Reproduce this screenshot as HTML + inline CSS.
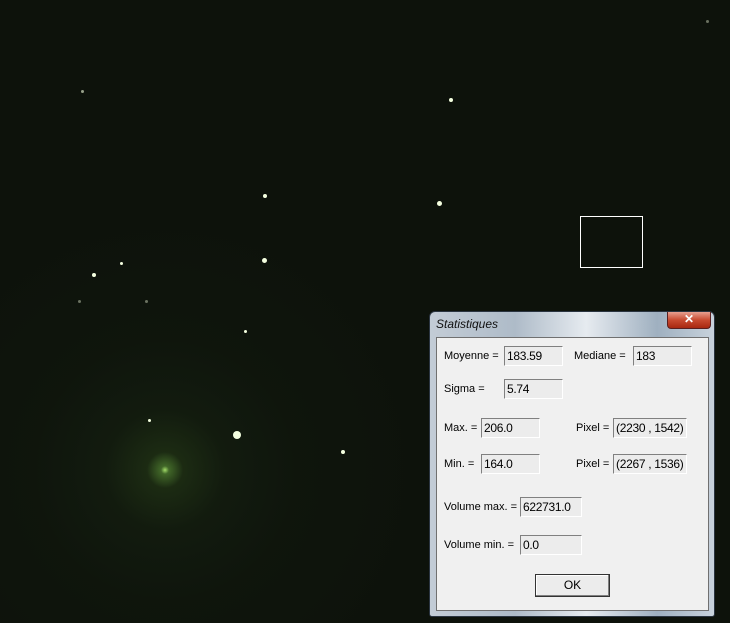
<!DOCTYPE html>
<html><head><meta charset="utf-8"><style>
*{margin:0;padding:0;box-sizing:border-box}
body{width:730px;height:623px;overflow:hidden;position:relative;font-family:"Liberation Sans",sans-serif;
background:
radial-gradient(circle at 165px 470px,rgba(170,230,110,.95) 0,rgba(100,160,60,.6) 4px,rgba(50,80,30,.4) 18px,rgba(30,48,22,.3) 60px,rgba(22,34,18,.2) 130px,rgba(15,25,12,0) 260px),
#0d120b;}
.s{position:absolute;border-radius:50%;background:#f4ffe0;}
.dlg{position:absolute;left:429px;top:311px;width:286px;height:306px;border:1px solid #2a3440;border-radius:6px 6px 3px 3px;
background:linear-gradient(90deg,#c3ccd6 0,#aebbc8 30%,#e6ebf0 55%,#9fb0c0 80%,#c8d2dc 100%);}
.title{position:absolute;left:6px;top:5px;font-style:italic;font-size:12px;color:#111}
.close{position:absolute;left:237px;top:0;width:44px;height:17px;border:1px solid #5a2020;border-top:none;border-radius:0 0 4px 4px;
background:linear-gradient(#e8a090,#c84a30 50%,#a82810);color:#fff;font-weight:bold;font-size:12px;text-align:center;line-height:15px}
.client{position:absolute;left:6px;top:25px;width:273px;height:274px;background:#f0f0f0;border:1px solid #707070}
.l{position:absolute;font-size:11px;color:#000;white-space:nowrap}
.b{position:absolute;height:20px;background:#ececec;border-top:1px solid #808080;border-left:1px solid #808080;border-right:1px solid #fff;border-bottom:1px solid #fff;font-size:12px;padding:2px 0 0 2px;color:#000;white-space:nowrap;overflow:hidden;letter-spacing:-.3px}
.ok{position:absolute;left:535px;top:574px;width:75px;height:23px;border:1px solid #333;background:#ececec;box-shadow:inset -1px -1px #808080,inset 1px 1px #fff;font-size:12px;text-align:center;line-height:21px}
.sel{position:absolute;left:580px;top:216px;width:63px;height:52px;border:1px solid #fff}
</style></head><body>
<div class="s" style="left:449px;top:98px;width:4px;height:4px"></div>
<div class="s" style="left:437px;top:201px;width:5px;height:5px"></div>
<div class="s" style="left:263px;top:194px;width:4px;height:4px"></div>
<div class="s" style="left:262px;top:258px;width:5px;height:5px"></div>
<div class="s" style="left:120px;top:262px;width:3px;height:3px"></div>
<div class="s" style="left:92px;top:273px;width:4px;height:4px"></div>
<div class="s" style="left:244px;top:330px;width:3px;height:3px"></div>
<div class="s" style="left:233px;top:431px;width:8px;height:8px"></div>
<div class="s" style="left:341px;top:450px;width:4px;height:4px"></div>
<div class="s" style="left:148px;top:419px;width:3px;height:3px"></div>
<div class="s" style="left:81px;top:90px;width:3px;height:3px;opacity:.6"></div>
<div class="s" style="left:145px;top:300px;width:3px;height:3px;opacity:.4"></div>
<div class="s" style="left:78px;top:300px;width:3px;height:3px;opacity:.4"></div>
<div class="s" style="left:706px;top:20px;width:3px;height:3px;opacity:.4"></div>
<div class="sel"></div>
<div class="dlg">
<div class="title">Statistiques</div>
<div class="close">✕</div>
<div class="client"></div>
</div>
<div class="l" style="left:444px;top:350px">Moyenne =</div><div class="b" style="left:504px;top:346px;width:59px">183.59</div>
<div class="l" style="left:574px;top:350px">Mediane =</div><div class="b" style="left:633px;top:346px;width:59px">183</div>
<div class="l" style="left:444px;top:383px">Sigma =</div><div class="b" style="left:504px;top:379px;width:59px">5.74</div>
<div class="l" style="left:444px;top:422px">Max. =</div><div class="b" style="left:481px;top:418px;width:59px">206.0</div>
<div class="l" style="left:576px;top:422px">Pixel =</div><div class="b" style="left:613px;top:418px;width:74px">(2230 , 1542)</div>
<div class="l" style="left:444px;top:458px">Min. =</div><div class="b" style="left:481px;top:454px;width:59px">164.0</div>
<div class="l" style="left:576px;top:458px">Pixel =</div><div class="b" style="left:613px;top:454px;width:74px">(2267 , 1536)</div>
<div class="l" style="left:444px;top:501px">Volume max. =</div><div class="b" style="left:520px;top:497px;width:62px">622731.0</div>
<div class="l" style="left:444px;top:539px">Volume min. =</div><div class="b" style="left:520px;top:535px;width:62px">0.0</div>
<div class="ok">OK</div>
</body></html>
